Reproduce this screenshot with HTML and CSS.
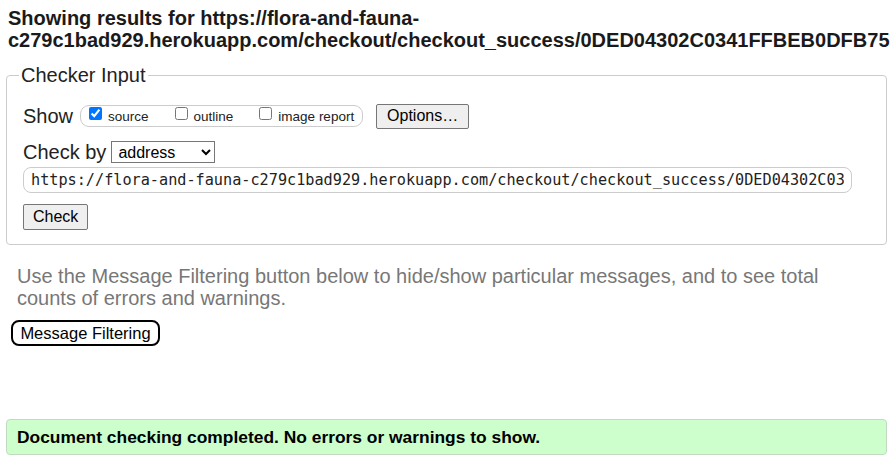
FILE: index.html
```html
<!DOCTYPE html>
<html lang="en">
<head>
<meta charset="utf-8">
<title>Showing results for https://flora-and-fauna-c279c1bad929.herokuapp.com/checkout/checkout_success/0DED04302C0341FFBEB0DFB75 - Nu Html Checker</title>
<link rel="stylesheet" href="styles.css">
</head>
<body>
<h2 class="title">Showing results for https://flora-and-fauna-c279c1bad929.herokuapp.com/checkout/checkout_success/0DED04302C0341FFBEB0DFB75</h2>
<form class="checker">
  <fieldset class="panel">
    <legend class="panel-legend">Checker Input</legend>
    <div class="row row-show">
      <span class="row-label">Show</span>
      <div class="show-group">
        <label class="opt"><input type="checkbox" class="opt-box" checked><span class="opt-text">source</span></label>
        <label class="opt"><input type="checkbox" class="opt-box"><span class="opt-text">outline</span></label>
        <label class="opt"><input type="checkbox" class="opt-box"><span class="opt-text">image report</span></label>
      </div>
      <button type="button" class="btn btn-options">Options…</button>
    </div>
    <div class="row row-by">
      <span class="row-label">Check by</span>
      <select class="by-select"><option>address</option></select>
    </div>
    <div class="row row-url">
      <input type="url" class="url-input" value="https://flora-and-fauna-c279c1bad929.herokuapp.com/checkout/checkout_success/0DED04302C0341FFBEB0DFB75">
    </div>
    <div class="row row-submit">
      <button type="button" class="btn btn-check">Check</button>
    </div>
  </fieldset>
</form>
<p class="hint">Use the Message Filtering button below to hide/show particular messages, and to see total counts of errors and warnings.</p>
<button type="button" class="filter-btn">Message Filtering</button>
<div class="success">Document checking completed. No errors or warnings to show.</div>
</body>
</html>
```
FILE: styles.css
```css
html, body {
  margin: 0;
  padding: 0;
  overflow: hidden;
  background: #fff;
}
body {
  font-family: "Liberation Sans", Arial, sans-serif;
  color: #222;
}
.title {
  margin: 7px 0 0;
  padding: 0 8px;
  font-size: 20px;
  line-height: 22px;
  font-weight: bold;
  color: #1a1a1a;
}
.checker {
  margin: 13px 6px 0;
}
.panel {
  margin: 0;
  border: 1px solid #ccc;
  border-radius: 4px;
  padding: 17px 16px 14px;
  min-width: 0;
}
.panel-legend {
  font-size: 20px;
  line-height: 22px;
  padding: 0 2px;
  margin-left: -4px;
  color: #222;
}
.row {
  display: flex;
  align-items: center;
}
.row-label {
  font-size: 20px;
  line-height: 24px;
  color: #222;
}
.row-show {
  height: 26px;
}
.show-group {
  margin-left: 7px;
  height: 20px;
  border: 1px solid #ccc;
  border-radius: 9px;
  padding: 0 8px;
  display: flex;
  gap: 26px;
  align-items: flex-start;
}
.opt {
  display: flex;
  align-items: flex-start;
  gap: 6px;
}
.opt-box {
  margin: 1px 0 0;
  width: 13px;
  height: 13px;
}
.opt-text {
  font-size: 13.5px;
  line-height: 20px;
  padding-top: 1px;
  color: #222;
}
.btn {
  font-family: "Liberation Sans", Arial, sans-serif;
  font-size: 16px;
  color: #000;
  background: #efefef;
  border: 1px solid #767676;
  border-radius: 2px;
  height: 26px;
  padding: 0 9px;
  line-height: 22px;
}
.btn-options {
  margin-left: 13px;
  width: 93px;
  height: 25px;
}
.row-by {
  margin-top: 11px;
  height: 24px;
}
.by-select {
  margin-left: 5px;
  width: 104px;
  height: 22px;
  font-family: "Liberation Sans", Arial, sans-serif;
  font-size: 16px;
  color: #000;
  background: #fff;
  border: 1px solid #767676;
  border-radius: 0;
  padding: 0 0 0 2px;
}
.row-url {
  margin-top: 3px;
}
.url-input {
  width: 829px;
  box-sizing: border-box;
  height: 26px;
  border: 1px solid #ccc;
  border-radius: 8px;
  padding: 0 7px;
  font-family: "DejaVu Sans Mono", "Liberation Mono", monospace;
  font-size: 15.2px;
  color: #222;
  background: #fff;
}
.row-submit {
  margin-top: 11px;
}
.btn-check {
  width: 65px;
}
.hint {
  margin: 20px 0 0;
  padding: 0 17px;
  font-size: 20px;
  line-height: 22px;
  color: #777;
}
.filter-btn {
  display: block;
  margin: 11px 0 0 11px;
  height: 26px;
  width: 149px;
  padding: 0;
  font-family: "Liberation Sans", Arial, sans-serif;
  font-size: 16.5px;
  color: #000;
  background: #fff;
  border: 2px solid #000;
  border-radius: 8px;
}
.success {
  margin: 73px 6px 0;
  height: 34px;
  line-height: 34px;
  padding: 0 10px;
  background: #ccffcc;
  border: 1px solid #c2d9c2;
  border-radius: 4px;
  font-size: 17.4px;
  font-weight: bold;
  color: #000;
}
```
